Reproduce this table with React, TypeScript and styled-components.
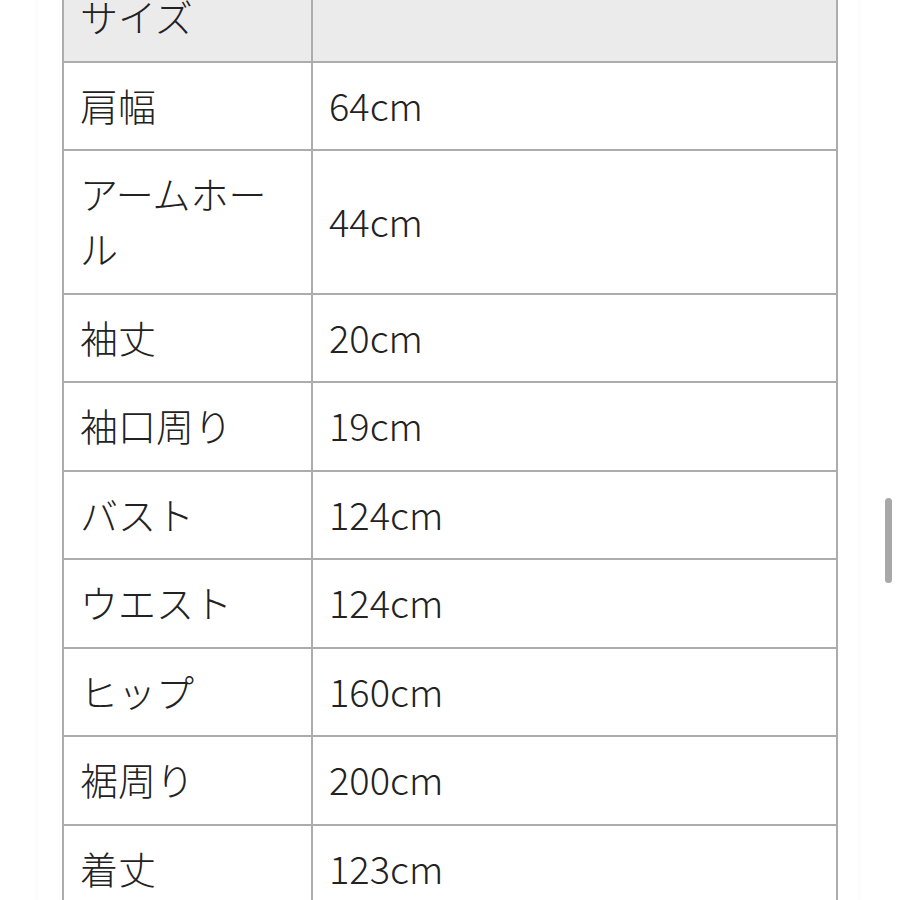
import styled, { createGlobalStyle } from "styled-components";

const GlobalStyle = createGlobalStyle`
  html, body {
    margin: 0;
    padding: 0;
    background: #ffffff;
    overflow: hidden;
  }
`;

const rows: { label: string; value: string }[] = [
  { label: "肩幅", value: "64cm" },
  { label: "アームホール", value: "44cm" },
  { label: "袖丈", value: "20cm" },
  { label: "袖口周り", value: "19cm" },
  { label: "バスト", value: "124cm" },
  { label: "ウエスト", value: "124cm" },
  { label: "ヒップ", value: "160cm" },
  { label: "裾周り", value: "200cm" },
  { label: "着丈", value: "123cm" },
];

function App() {
  return (
    <>
      <GlobalStyle />
      <Viewport>
        <Page>
          <SizeTable>
            <thead>
              <tr>
                <HeadCell>サイズ</HeadCell>
                <HeadCell />
              </tr>
            </thead>
            <tbody>
              {rows.map((row) => (
                <tr key={row.label}>
                  <LabelCell>{row.label}</LabelCell>
                  <ValueCell>{row.value}</ValueCell>
                </tr>
              ))}
            </tbody>
          </SizeTable>
        </Page>
        <ScrollThumb />
      </Viewport>
    </>
  );
}

const Viewport = styled.div`
  position: relative;
  width: 900px;
  height: 900px;
  overflow: hidden;
  background: #ffffff;
`;

const Page = styled.div`
  width: 820px;
  margin: -28px 0 0 38px;
  padding: 0 23px 0 24px;
  box-sizing: border-box;
  background: #ffffff;
  box-shadow: 0 0 6px rgba(0, 0, 0, 0.04);
  height: 1100px;
`;

const SizeTable = styled.table`
  width: 776px;
  border-collapse: collapse;
  table-layout: fixed;
  font-family: "Noto Sans CJK JP", "Noto Sans", sans-serif;
  font-size: 38px;
  line-height: 55px;
  color: #222222;
`;

const Cell = styled.td`
  border: 2px solid #acacac;
  padding: 14px 16px 17.5px 16px;
  vertical-align: middle;
  text-align: left;
  font-weight: 300;
`;

const HeadCell = styled(Cell).attrs({ as: "th" })`
  background: #ebebeb;
  &:first-child {
    width: 215px;
  }
`;

const LabelCell = styled(Cell)``;

const ValueCell = styled(Cell)``;

const ScrollThumb = styled.div`
  position: absolute;
  left: 885px;
  top: 498px;
  width: 7px;
  height: 85px;
  border-radius: 4px;
  background: #a8a8a8;
`;

export default App;
